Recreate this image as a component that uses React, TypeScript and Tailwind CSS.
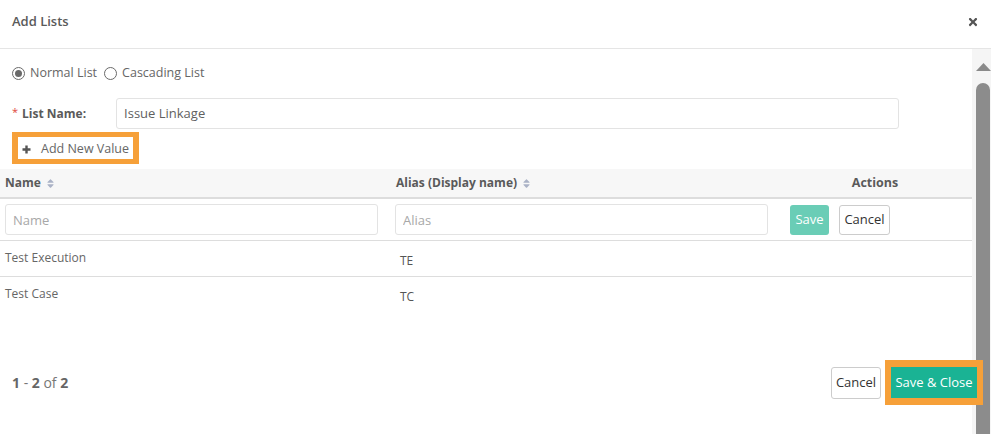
import React from 'react';
import { FaTimes, FaSort } from 'react-icons/fa';

const Radio = ({ checked, label }: { checked?: boolean; label: string }) => {
  return (
    <label className="flex items-center gap-[5px]">
      <span className="w-[13px] h-[13px] rounded-full border border-[#6a6a6a] bg-white flex items-center justify-center">
        {checked && <span className="w-[7px] h-[7px] rounded-full bg-[#6a6a6a]"></span>}
      </span>
      <span>{label}</span>
    </label>
  );
};

const rows = [
  { name: 'Test Execution', alias: 'TE' },
  { name: 'Test Case', alias: 'TC' },
];

const App = () => {
  return (
    <div
      className="w-[991px] h-[434px] overflow-hidden bg-white flex flex-col text-[12px] text-[#666]"
      style={{ fontFamily: '"Open Sans", "Liberation Sans", sans-serif' }}
    >
      <div className="h-[49px] shrink-0 border-b border-[#e5e5e5] flex items-center justify-between pl-3 pr-[12px]">
        <h1 className="text-[13px] font-semibold text-[#5a5a5a] -mt-[5px]">Add Lists</h1>
        <FaTimes className="text-[#555] -mt-[5px]" size={12} />
      </div>

      <div className="flex flex-row flex-1 min-h-0">
        <div className="w-[972px] shrink-0 flex flex-col">
          <div className="pl-3 pt-[16px] h-[33px] flex items-center gap-[7px] text-[12.5px]">
            <Radio checked label="Normal List" />
            <Radio label="Cascading List" />
          </div>

          <div className="pl-3 mt-4 flex items-center">
            <span className="text-[#e0473c] text-[11px] mr-[4px] -mt-[3px]">*</span>
            <span className="font-bold text-[#5a5a5a] w-[94px]">List Name:</span>
            <div className="w-[783px] h-[31px] border border-[#e3e3e3] rounded-[3px] flex items-center px-[7px] text-[13px] text-[#5f5f5f]">
              Issue Linkage
            </div>
          </div>

          <div className="pl-3 mt-[3px] flex">
            <div className="border-x-[6px] border-y-[5px] border-[#f6a039]">
              <button className="h-[22px] w-[115px] bg-white flex items-center pl-[4px] gap-[10px] text-[12.5px] text-[#666] pt-[2px]">
                <svg width="9" height="9" viewBox="0 0 9 9">
                  <path d="M4.5 0.5 V8.5 M0.5 4.5 H8.5" stroke="#555" strokeWidth="2.4" />
                </svg>
                Add New Value
              </button>
            </div>
          </div>

          <div className="mt-[5px]">
            <div className="grid grid-cols-[390px_390px_192px] h-[30px] bg-[#f7f7f7] border-b-2 border-[#dddddd] font-bold text-[#5a5a5a]">
              <div className="pl-[5px] flex items-center gap-[4px]">
                Name <FaSort className="text-[#aab2c6]" size={11} />
              </div>
              <div className="pl-[6px] flex items-center gap-[4px]">
                Alias (Display name) <FaSort className="text-[#aab2c6]" size={11} />
              </div>
              <div className="flex items-center justify-center pr-[2px] text-[12.5px]">Actions</div>
            </div>

            <div className="grid grid-cols-[390px_390px_192px] pt-[5px] pb-[5px] border-b border-[#dddddd]">
              <div className="pl-[5px]">
                <input
                  placeholder="Name"
                  className="w-[373px] h-[31px] border border-[#e3e3e3] rounded-[3px] px-[7px] text-[13px] placeholder:text-[#a8a8a8] outline-none"
                />
              </div>
              <div className="pl-[5px]">
                <input
                  placeholder="Alias"
                  className="w-[373px] h-[31px] border border-[#e3e3e3] rounded-[3px] px-[7px] text-[13px] placeholder:text-[#a8a8a8] outline-none"
                />
              </div>
              <div className="pl-[10px] flex items-center gap-[10px]">
                <button className="w-[39px] h-[30px] rounded-[3px] bg-[#6acdb6] text-white text-[13px]">Save</button>
                <button className="w-[51px] h-[30px] rounded-[3px] border border-[#cccccc] bg-white text-[#333] text-[13px]">Cancel</button>
              </div>
            </div>

            {rows.map((r, i) => (
              <div
                key={r.name}
                className={`grid grid-cols-[390px_390px_192px] h-[36px] ${i === 0 ? 'border-b border-[#dddddd]' : ''}`}
              >
                <div className="pl-[5px] pt-[8px] text-[#666]">{r.name}</div>
                <div className="pl-[10px] pt-[11px] text-[#555]">{r.alias}</div>
                <div></div>
              </div>
            ))}
          </div>

          <div className="mt-[47px] flex items-center justify-between pl-3">
            <div className="text-[14px] text-[#777]">
              <span className="font-bold text-[#666]">1</span> - <span className="font-bold text-[#666]">2</span> of{' '}
              <span className="font-bold text-[#666]">2</span>
            </div>
            <div className="flex items-center -mr-[11px] relative z-10">
              <button className="w-[50px] h-[32px] rounded-[3px] border border-[#cccccc] bg-white text-[#333] text-[13px]">
                Cancel
              </button>
              <div className="ml-[4px] border-x-[6px] border-t-[7px] border-b-[7px] border-[#f6a039]">
                <button className="w-[86px] h-[31px] bg-[#1ab394] text-white text-[13px] block">Save &amp; Close</button>
              </div>
            </div>
          </div>
        </div>

        <div className="w-[19px] shrink-0 bg-[#f5f5f5] flex flex-col items-end">
          <svg width="15" height="8" viewBox="0 0 15 8" className="mt-[14px]">
            <polygon points="7.5,0 15,8 0,8" fill="#8a8a8a" />
          </svg>
          <div className="mt-[12px] w-[14px] flex-1 rounded-t-full bg-[#8c8c8c] mr-[1px]"></div>
        </div>
      </div>
    </div>
  );
};

export default App;
